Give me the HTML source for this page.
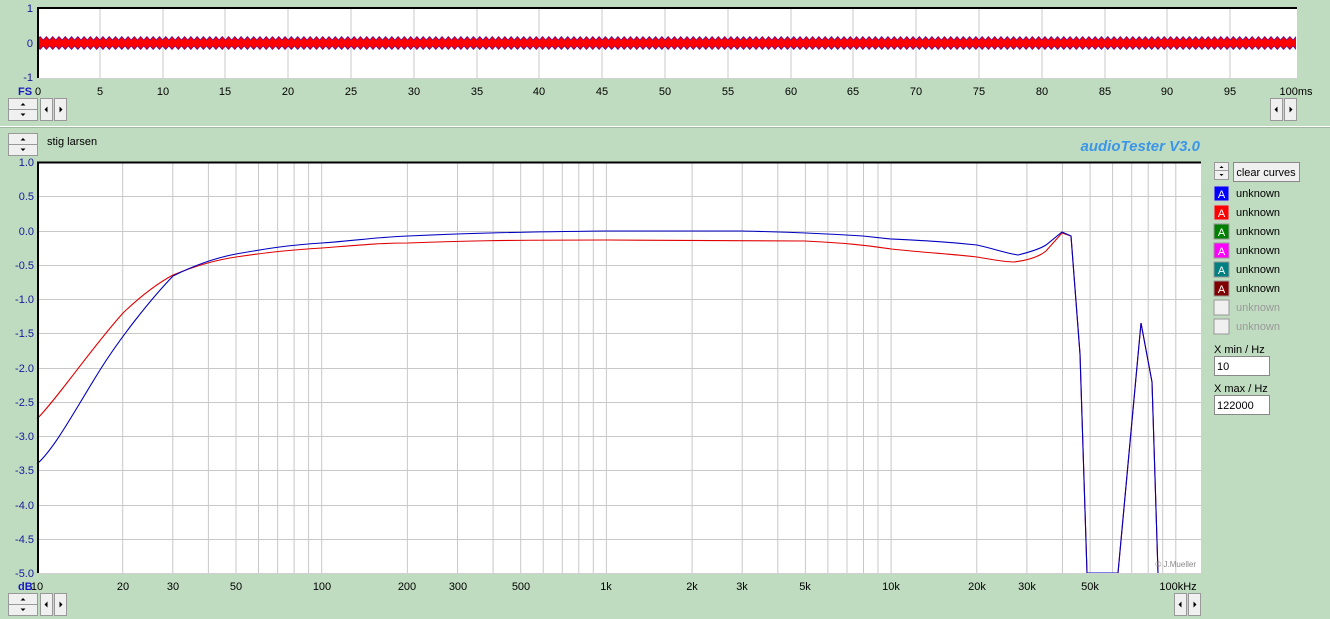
<!DOCTYPE html>
<html><head><meta charset="utf-8"><style>
body{margin:0;width:1330px;height:619px;background:#c0dcc0;overflow:hidden;font-family:"Liberation Sans",Arial,sans-serif;}
svg{position:absolute;left:0;top:0}
</style></head><body>
<svg width="1330" height="619" viewBox="0 0 1330 619" xmlns="http://www.w3.org/2000/svg" font-family="Liberation Sans, Arial, sans-serif">
<defs>
<pattern id="wv" x="37" y="36" width="6.28" height="14" patternUnits="userSpaceOnUse">
<path d="M0 4 L3.14 0.5 L6.28 4 L6.28 10 L3.14 13.5 L0 10Z" fill="#ff0000"/>
<path d="M0 4 L3.14 0.5 L6.28 4" fill="none" stroke="#500090" stroke-width="0.7"/>
<path d="M0 10 L3.14 13.5 L6.28 10" fill="none" stroke="#500090" stroke-width="0.7"/>
</pattern>
</defs>
<!-- top plot -->
<rect x="37" y="8" width="1260" height="70" fill="#fff"/>
<g stroke="#c8c8c8" stroke-width="1">
<path d="M100 8V78M163 8V78M225 8V78M288 8V78M351 8V78M414 8V78M477 8V78M539 8V78M602 8V78M665 8V78M728 8V78M791 8V78M853 8V78M916 8V78M979 8V78M1042 8V78M1105 8V78M1167 8V78M1230 8V78"/>
</g>
<rect x="37" y="36" width="1259" height="14" fill="url(#wv)"/>
<path d="M38 8V78M37 8H1297" stroke="#000" stroke-width="2"/>
<path d="M37 78.5H1297.5V8" stroke="#d0d0d0" stroke-width="1" fill="none"/>
<g fill="#1818a0" font-size="11" text-anchor="end">
<text x="33" y="12">1</text><text x="33" y="47">0</text><text x="33" y="81">-1</text>
</g>
<text x="18" y="95" fill="#1818c0" font-size="11" font-weight="bold">FS</text>
<g font-size="11" fill="#000" text-anchor="middle">
<text x="38" y="95">0</text><text x="100" y="95">5</text><text x="163" y="95">10</text><text x="225" y="95">15</text><text x="288" y="95">20</text><text x="351" y="95">25</text><text x="414" y="95">30</text><text x="477" y="95">35</text><text x="539" y="95">40</text><text x="602" y="95">45</text><text x="665" y="95">50</text><text x="728" y="95">55</text><text x="791" y="95">60</text><text x="853" y="95">65</text><text x="916" y="95">70</text><text x="979" y="95">75</text><text x="1042" y="95">80</text><text x="1105" y="95">85</text><text x="1167" y="95">90</text><text x="1230" y="95">95</text><text x="1296" y="95">100ms</text>
</g>
<path d="M0 126.5H1330" stroke="#fff" stroke-width="1"/>
<path d="M0 127.5H1330" stroke="#a0b8a0" stroke-width="1"/>
<text x="47" y="145" font-size="11" fill="#000">stig larsen</text>
<text x="1200" y="151" font-size="15" font-weight="bold" font-style="italic" fill="#3c96e8" text-anchor="end">audioTester  V3.0</text>
<!-- bottom plot -->
<rect x="37" y="162" width="1164" height="411" fill="#fff"/>
<g stroke="#c8c8c8" stroke-width="1">
<path d="M37 196.5H1201M37 265.5H1201M37 299.5H1201M37 333.5H1201M37 368.5H1201M37 402.5H1201M37 436.5H1201M37 470.5H1201M37 505.5H1201M37 539.5H1201M37 231.5H1201"/>
<path d="M122.7 162V573M172.8 162V573M208.4 162V573M236 162V573M258.5 162V573M277.6 162V573M294.1 162V573M308.6 162V573M321.7 162V573M407.4 162V573M457.5 162V573M493.1 162V573M520.7 162V573M543.2 162V573M562.3 162V573M578.8 162V573M593.3 162V573M606.4 162V573M692.1 162V573M742.2 162V573M777.8 162V573M805.4 162V573M827.9 162V573M847 162V573M863.5 162V573M878 162V573M891.1 162V573M976.8 162V573M1026.9 162V573M1062.5 162V573M1090.1 162V573M1112.6 162V573M1131.7 162V573M1148.2 162V573M1162.7 162V573M1175.8 162V573"/>
</g>
<path fill="none" stroke="#e00000" stroke-width="1.1" d="M37,419 C60,395 90,350 123,313 C145,292 160,282 173,275 C195,266 215,260 236,257 C270,252 290,250 322,248 C360,245 380,243 408,243 C460,241 500,240 607,240 L805,241 C840,243 860,244 891,249 C930,253 950,254 977,257 C995,260 1005,262 1014,262 C1030,260 1040,256 1046,251 L1062,233 L1071,236 L1080,354 L1087,573 L1118,573 L1141,323 L1152,382 L1158,573"/>
<path fill="none" stroke="#0000c0" stroke-width="1.1" d="M37,464 C55,448 75,410 100,370 C120,338 150,300 173,276 C195,265 215,258 236,254 C270,248 290,245 322,243 C360,240 380,237 408,236 C470,233 520,232 607,231 L742,231 C780,232 800,232 863,236 L891,239 C930,241 950,242 977,245 C995,249 1005,253 1018,255 C1030,252 1040,249 1046,245 L1062,232 L1071,236 L1080,354 L1087,573 L1118,573 L1141,323 L1152,382 L1158,573"/>
<path d="M38 162V574M37 162.5H1201" stroke="#000" stroke-width="2"/>
<path d="M37 573.5H1201.5V162" stroke="#d0d0d0" fill="none"/>
<text x="1196" y="567" font-size="8" fill="#888" text-anchor="end">© J.Mueller</text>
<g fill="#1818a0" font-size="11" text-anchor="end">
<text x="34" y="166">1.0</text><text x="34" y="200">0.5</text><text x="34" y="235">0.0</text><text x="34" y="269">-0.5</text><text x="34" y="303">-1.0</text><text x="34" y="337">-1.5</text><text x="34" y="372">-2.0</text><text x="34" y="406">-2.5</text><text x="34" y="440">-3.0</text><text x="34" y="474">-3.5</text><text x="34" y="509">-4.0</text><text x="34" y="543">-4.5</text><text x="34" y="577">-5.0</text>
</g>
<text x="18" y="590" fill="#1818c0" font-size="11" font-weight="bold">dB</text>
<g font-size="11" fill="#000" text-anchor="middle">
<text x="37" y="590">10</text><text x="123" y="590">20</text><text x="173" y="590">30</text><text x="236" y="590">50</text><text x="322" y="590">100</text><text x="407" y="590">200</text><text x="458" y="590">300</text><text x="521" y="590">500</text><text x="606" y="590">1k</text><text x="692" y="590">2k</text><text x="742" y="590">3k</text><text x="805" y="590">5k</text><text x="891" y="590">10k</text><text x="977" y="590">20k</text><text x="1027" y="590">30k</text><text x="1090" y="590">50k</text><text x="1178" y="590">100kHz</text>
</g>
<!-- buttons -->
<g>
<g id="spin">
<rect x="8.5" y="98.5" width="29" height="11" fill="#f0f0f0" stroke="#999"/>
<rect x="8.5" y="109.5" width="29" height="11" fill="#f0f0f0" stroke="#999"/>
<path d="M20.5 105.5h5l-2.5-2.5z M20.5 113.5h5l-2.5 2.5z" fill="#000"/>
</g>
<use href="#spin" y="35"/>
<use href="#spin" y="495"/>
<g id="arr">
<rect x="40.5" y="98.5" width="12" height="22" fill="#f0f0f0" stroke="#999"/>
<rect x="54.5" y="98.5" width="12" height="22" fill="#f0f0f0" stroke="#999"/>
<path d="M47.5 106.5v6l-3-3z M59.5 106.5v6l3-3z" fill="#000"/>
</g>
<use href="#arr" y="495"/>
<use href="#arr" x="1230"/>
<use href="#arr" x="1134" y="495"/>
</g>
<!-- right panel -->
<rect x="1214.5" y="162.5" width="14" height="8" fill="#f0f0f0" stroke="#999"/>
<rect x="1214.5" y="170.5" width="14" height="9" fill="#f0f0f0" stroke="#999"/>
<path d="M1219.5 168h4l-2-2z M1219.5 174h4l-2 2z" fill="#000"/>
<rect x="1233.5" y="162.5" width="66" height="19" fill="#f0f0f0" stroke="#888"/>
<text x="1266" y="176" font-size="11" text-anchor="middle">clear curves</text>
<g font-size="11">
<rect x="1214" y="186" width="15" height="15" fill="#0000ff" stroke="#ccc"/><text x="1221.5" y="198" fill="#fff" text-anchor="middle">A</text><text x="1236" y="197" fill="#000">unknown</text>
<rect x="1214" y="205" width="15" height="15" fill="#ff0000" stroke="#ccc"/><text x="1221.5" y="217" fill="#fff" text-anchor="middle">A</text><text x="1236" y="216" fill="#000">unknown</text>
<rect x="1214" y="224" width="15" height="15" fill="#008000" stroke="#999"/><text x="1221.5" y="236" fill="#fff" text-anchor="middle">A</text><text x="1236" y="235" fill="#000">unknown</text>
<rect x="1214" y="243" width="15" height="15" fill="#ff00ff" stroke="#999"/><text x="1221.5" y="255" fill="#fff" text-anchor="middle">A</text><text x="1236" y="254" fill="#000">unknown</text>
<rect x="1214" y="262" width="15" height="15" fill="#008080" stroke="#999"/><text x="1221.5" y="274" fill="#fff" text-anchor="middle">A</text><text x="1236" y="273" fill="#000">unknown</text>
<rect x="1214" y="281" width="15" height="15" fill="#800000" stroke="#999"/><text x="1221.5" y="293" fill="#fff" text-anchor="middle">A</text><text x="1236" y="292" fill="#000">unknown</text>
<rect x="1214" y="300" width="15" height="15" fill="#f0f0f0" stroke="#999"/><text x="1236" y="311" fill="#999">unknown</text>
<rect x="1214" y="319" width="15" height="15" fill="#f0f0f0" stroke="#999"/><text x="1236" y="330" fill="#999">unknown</text>
<text x="1214" y="353" fill="#000">X min / Hz</text>
<rect x="1214.5" y="356.5" width="55" height="19" fill="#fff" stroke="#888"/><text x="1217" y="370" fill="#000">10</text>
<text x="1214" y="392" fill="#000">X max / Hz</text>
<rect x="1214.5" y="395.5" width="55" height="19" fill="#fff" stroke="#888"/><text x="1217" y="409" fill="#000">122000</text>
</g>
</svg>
</body></html>
